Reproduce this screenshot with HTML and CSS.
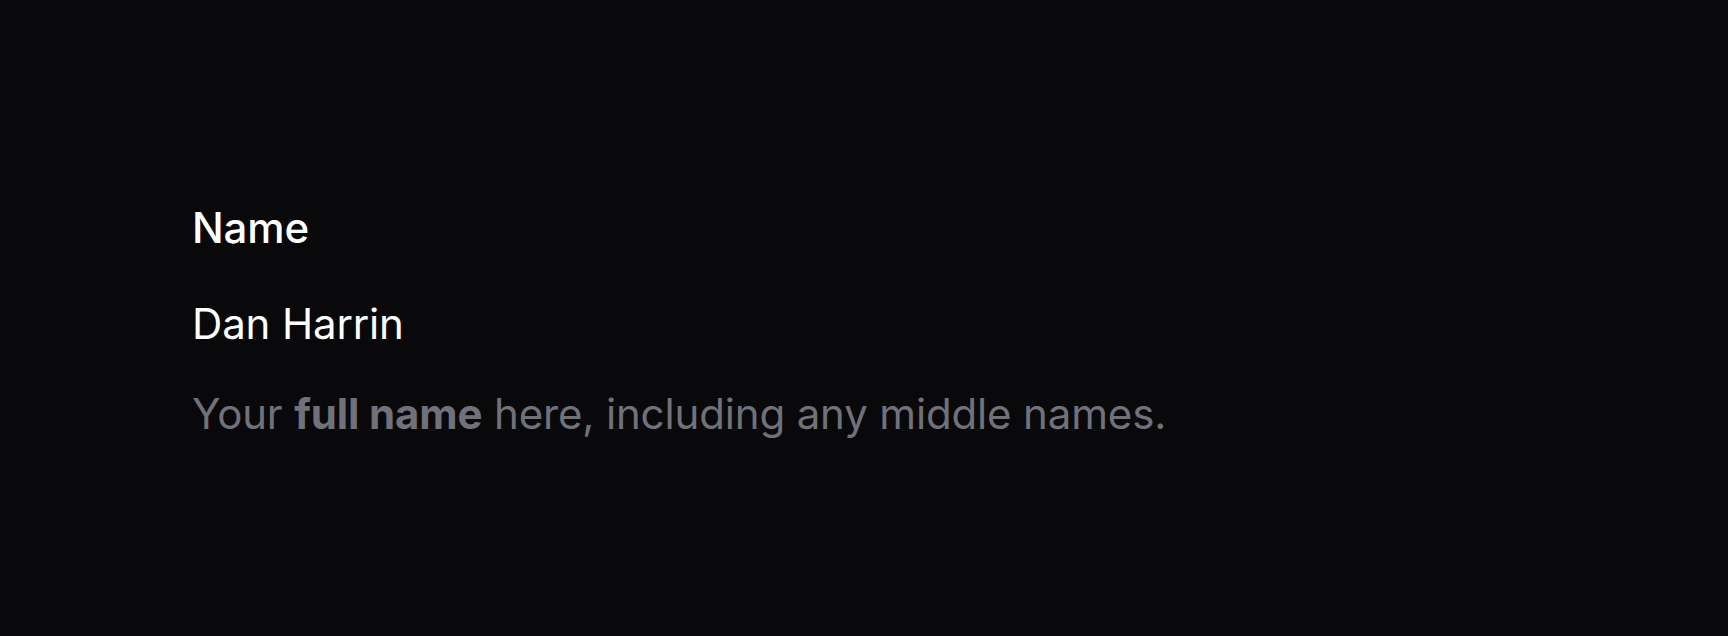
FILE: index.html
```html
<!DOCTYPE html>
<html lang="en">
<head>
<meta charset="utf-8">
<title>Name</title>
<link rel="stylesheet" href="styles.css">
</head>
<body>
<main class="page">
  <div class="field">
    <div class="field-label">Name</div>
    <div class="field-value">Dan Harrin</div>
    <p class="field-helper">Your <strong>full name</strong> here, including any middle names.</p>
  </div>
</main>
</body>
</html>
```

FILE: styles.css
```css
html, body {
  margin: 0;
  padding: 0;
  background: #09090b;
}

body {
  font-family: "Inter", "Noto Sans", sans-serif;
  font-size: 42px;
  letter-spacing: -0.15px;
  color: #ffffff;
  width: 1728px;
  height: 636px;
  overflow: hidden;
}

.page {
  padding: 192px 192px 0 192px;
}

.field {
  display: flex;
  flex-direction: column;
  gap: 24px;
}

.field-label {
  font-weight: 500;
  line-height: 72px;
  color: #ffffff;
}

.field-value {
  font-weight: 400;
  line-height: 72px;
  color: #ffffff;
}

.field-helper {
  margin: 0;
  font-weight: 400;
  line-height: 60px;
  color: #71717a;
}

.field-helper strong {
  font-weight: 700;
}
```
